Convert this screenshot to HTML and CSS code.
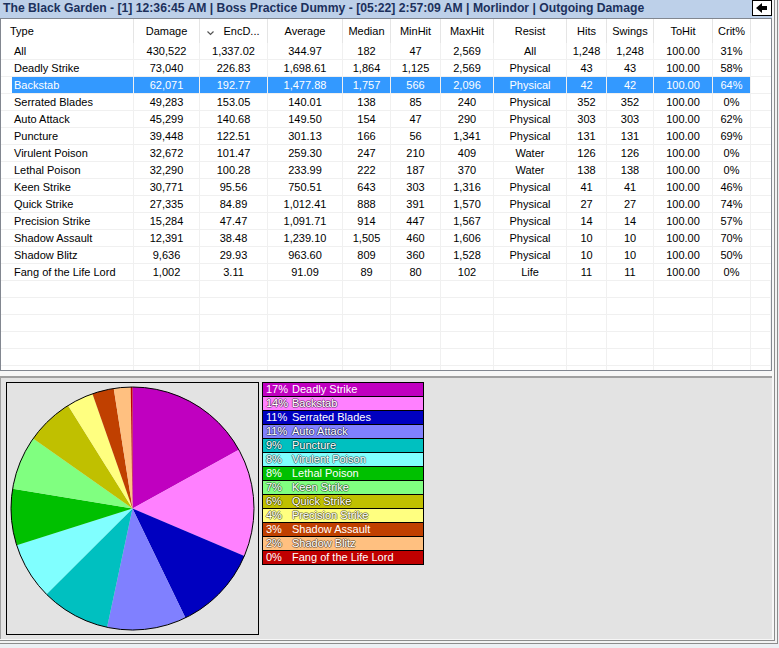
FILE: index.html
```html
<!DOCTYPE html>
<html>
<head>
<meta charset="utf-8">
<link rel="stylesheet" href="styles.css">
</head>
<body>
<div class="frame-outer">
<div class="frame-inner">
  <div class="titlebar">
    <span class="title">The Black Garden - [1] 12:36:45 AM | Boss Practice Dummy - [05:22] 2:57:09 AM | Morlindor | Outgoing Damage</span>
    <span class="backbtn"><svg width="18" height="14" viewBox="0 0 18 14"><path d="M3 7 L9 2 L9 5 L14 5 L14 9 L9 9 L9 12 Z" fill="#000"/></svg></span>
  </div>
  <div class="list">
    <table class="grid">
      <colgroup>
        <col class="w133"><col class="w66"><col class="w68"><col class="w75"><col class="w48"><col class="w50"><col class="w53"><col class="w73"><col class="w40"><col class="w47"><col class="w59"><col class="w38"><col>
      </colgroup>
      <thead>
        <tr><th class="c-type">Type</th><th>Damage</th><th><svg class="chev" width="7" height="5" viewBox="0 0 7 5"><path d="M0.5 0.5 L3.5 3.5 L6.5 0.5" fill="none" stroke="#555" stroke-width="1.2"/></svg><span class="enc">EncD...</span></th><th>Average</th><th>Median</th><th>MinHit</th><th>MaxHit</th><th>Resist</th><th>Hits</th><th>Swings</th><th>ToHit</th><th>Crit%</th><th class="c-fill"></th></tr>
      </thead>
      <tbody>
        <tr><td class="c-type">All</td><td>430,522</td><td>1,337.02</td><td>344.97</td><td>182</td><td>47</td><td>2,569</td><td>All</td><td>1,248</td><td>1,248</td><td>100.00</td><td>31%</td><td class="c-fill"></td></tr>
        <tr><td class="c-type">Deadly Strike</td><td>73,040</td><td>226.83</td><td>1,698.61</td><td>1,864</td><td>1,125</td><td>2,569</td><td>Physical</td><td>43</td><td>43</td><td>100.00</td><td>58%</td><td class="c-fill"></td></tr>
        <tr class="sel"><td class="c-type">Backstab</td><td>62,071</td><td>192.77</td><td>1,477.88</td><td>1,757</td><td>566</td><td>2,096</td><td>Physical</td><td>42</td><td>42</td><td>100.00</td><td>64%</td><td class="c-fill"></td></tr>
        <tr><td class="c-type">Serrated Blades</td><td>49,283</td><td>153.05</td><td>140.01</td><td>138</td><td>85</td><td>240</td><td>Physical</td><td>352</td><td>352</td><td>100.00</td><td>0%</td><td class="c-fill"></td></tr>
        <tr><td class="c-type">Auto Attack</td><td>45,299</td><td>140.68</td><td>149.50</td><td>154</td><td>47</td><td>290</td><td>Physical</td><td>303</td><td>303</td><td>100.00</td><td>62%</td><td class="c-fill"></td></tr>
        <tr><td class="c-type">Puncture</td><td>39,448</td><td>122.51</td><td>301.13</td><td>166</td><td>56</td><td>1,341</td><td>Physical</td><td>131</td><td>131</td><td>100.00</td><td>69%</td><td class="c-fill"></td></tr>
        <tr><td class="c-type">Virulent Poison</td><td>32,672</td><td>101.47</td><td>259.30</td><td>247</td><td>210</td><td>409</td><td>Water</td><td>126</td><td>126</td><td>100.00</td><td>0%</td><td class="c-fill"></td></tr>
        <tr><td class="c-type">Lethal Poison</td><td>32,290</td><td>100.28</td><td>233.99</td><td>222</td><td>187</td><td>370</td><td>Water</td><td>138</td><td>138</td><td>100.00</td><td>0%</td><td class="c-fill"></td></tr>
        <tr><td class="c-type">Keen Strike</td><td>30,771</td><td>95.56</td><td>750.51</td><td>643</td><td>303</td><td>1,316</td><td>Physical</td><td>41</td><td>41</td><td>100.00</td><td>46%</td><td class="c-fill"></td></tr>
        <tr><td class="c-type">Quick Strike</td><td>27,335</td><td>84.89</td><td>1,012.41</td><td>888</td><td>391</td><td>1,570</td><td>Physical</td><td>27</td><td>27</td><td>100.00</td><td>74%</td><td class="c-fill"></td></tr>
        <tr><td class="c-type">Precision Strike</td><td>15,284</td><td>47.47</td><td>1,091.71</td><td>914</td><td>447</td><td>1,567</td><td>Physical</td><td>14</td><td>14</td><td>100.00</td><td>57%</td><td class="c-fill"></td></tr>
        <tr><td class="c-type">Shadow Assault</td><td>12,391</td><td>38.48</td><td>1,239.10</td><td>1,505</td><td>460</td><td>1,606</td><td>Physical</td><td>10</td><td>10</td><td>100.00</td><td>70%</td><td class="c-fill"></td></tr>
        <tr><td class="c-type">Shadow Blitz</td><td>9,636</td><td>29.93</td><td>963.60</td><td>809</td><td>360</td><td>1,528</td><td>Physical</td><td>10</td><td>10</td><td>100.00</td><td>50%</td><td class="c-fill"></td></tr>
        <tr><td class="c-type">Fang of the Life Lord</td><td>1,002</td><td>3.11</td><td>91.09</td><td>89</td><td>80</td><td>102</td><td>Life</td><td>11</td><td>11</td><td>100.00</td><td>0%</td><td class="c-fill"></td></tr>
        <tr class="empty"><td></td><td></td><td></td><td></td><td></td><td></td><td></td><td></td><td></td><td></td><td></td><td></td><td></td></tr>
        <tr class="empty"><td></td><td></td><td></td><td></td><td></td><td></td><td></td><td></td><td></td><td></td><td></td><td></td><td></td></tr>
        <tr class="empty"><td></td><td></td><td></td><td></td><td></td><td></td><td></td><td></td><td></td><td></td><td></td><td></td><td></td></tr>
        <tr class="empty"><td></td><td></td><td></td><td></td><td></td><td></td><td></td><td></td><td></td><td></td><td></td><td></td><td></td></tr>
        <tr class="empty"><td></td><td></td><td></td><td></td><td></td><td></td><td></td><td></td><td></td><td></td><td></td><td></td><td></td></tr>
        <tr class="empty"><td></td><td></td><td></td><td></td><td></td><td></td><td></td><td></td><td></td><td></td><td></td><td></td><td></td></tr>
      </tbody>
    </table>
  </div>
  <div class="splitter"></div>
  <div class="lower">
    <div class="piebox">
      <svg width="251" height="251" viewBox="0 0 251 251">
        <path d="M125.5 125.5 L125.5 4 A121.5 121.5 0 0 1 231.85 66.74 Z" fill="#c000c0"/>
        <path d="M125.5 125.5 L231.85 66.74 A121.5 121.5 0 0 1 237.35 172.93 Z" fill="#ff80ff"/>
        <path d="M125.5 125.5 L237.35 172.93 A121.5 121.5 0 0 1 178.40 234.87 Z" fill="#0000c0"/>
        <path d="M125.5 125.5 L178.40 234.87 A121.5 121.5 0 0 1 100.09 244.31 Z" fill="#8080ff"/>
        <path d="M125.5 125.5 L100.09 244.31 A121.5 121.5 0 0 1 39.49 211.32 Z" fill="#00c0c0"/>
        <path d="M125.5 125.5 L39.49 211.32 A121.5 121.5 0 0 1 9.70 162.28 Z" fill="#80ffff"/>
        <path d="M125.5 125.5 L9.70 162.28 A121.5 121.5 0 0 1 5.63 105.70 Z" fill="#00c000"/>
        <path d="M125.5 125.5 L5.63 105.70 A121.5 121.5 0 0 1 26.11 55.61 Z" fill="#80ff80"/>
        <path d="M125.5 125.5 L26.11 55.61 A121.5 121.5 0 0 1 61.07 22.49 Z" fill="#c0c000"/>
        <path d="M125.5 125.5 L61.07 22.49 A121.5 121.5 0 0 1 85.44 10.79 Z" fill="#ffff80"/>
        <path d="M125.5 125.5 L85.44 10.79 A121.5 121.5 0 0 1 106.73 5.46 Z" fill="#c04000"/>
        <path d="M125.5 125.5 L106.73 5.46 A121.5 121.5 0 0 1 123.74 4.01 Z" fill="#ffc080"/>
        <path d="M125.5 125.5 L123.74 4.01 A121.5 121.5 0 0 1 125.5 4 Z" fill="#c00000"/>
        <circle cx="125.5" cy="125.5" r="121.5" fill="none" stroke="#000" stroke-width="1"/>
      </svg>
    </div>
    <div class="legend">
      <div class="lg-row c1"><span class="pct">17%</span><span>Deadly Strike</span></div>
      <div class="lg-row c2 lt"><span class="pct">14%</span><span>Backstab</span></div>
      <div class="lg-row c3"><span class="pct">11%</span><span>Serrated Blades</span></div>
      <div class="lg-row c4 lt"><span class="pct">11%</span><span>Auto Attack</span></div>
      <div class="lg-row c5 lt"><span class="pct">9%</span><span>Puncture</span></div>
      <div class="lg-row c6 lt"><span class="pct">8%</span><span>Virulent Poison</span></div>
      <div class="lg-row c7"><span class="pct">8%</span><span>Lethal Poison</span></div>
      <div class="lg-row c8 lt"><span class="pct">7%</span><span>Keen Strike</span></div>
      <div class="lg-row c9 lt"><span class="pct">6%</span><span>Quick Strike</span></div>
      <div class="lg-row c10 lt"><span class="pct">4%</span><span>Precision Strike</span></div>
      <div class="lg-row c11"><span class="pct">3%</span><span>Shadow Assault</span></div>
      <div class="lg-row c12 lt"><span class="pct">2%</span><span>Shadow Blitz</span></div>
      <div class="lg-row c13"><span class="pct">0%</span><span>Fang of the Life Lord</span></div>
    </div>
  </div>
</div>
</div>
</body>
</html>
```
FILE: styles.css
```css
* { box-sizing: border-box; }
html, body { margin: 0; padding: 0; }
body {
  width: 779px;
  height: 648px;
  overflow: hidden;
  background: #eceff3;
  font-family: "Liberation Sans", Arial, sans-serif;
  font-size: 11px;
  color: #000;
}
.frame-outer {
  width: 778px;
  height: 644px;
  border-right: 1px solid #8c8c8c;
  border-bottom: 1px solid #8c8c8c;
  padding: 0 2px 2px 0;
  background: #f2f2f2;
}
.frame-inner {
  width: 775px;
  height: 641px;
  border-right: 1px solid #8c8c8c;
  border-bottom: 1px solid #8c8c8c;
  padding: 0 2px 1px 0;
  display: flex;
  flex-direction: column;
  background: #f7f7f7;
}
.titlebar {
  height: 18px;
  flex: none;
  display: flex;
  background: #bdd0e9;
}
.title {
  flex: 1;
  padding-left: 3px;
  line-height: 17px;
  font-weight: bold;
  font-size: 12.2px;
  color: #1c305c;
  white-space: nowrap;
  overflow: hidden;
}
.backbtn {
  width: 20px;
  height: 16px;
  border: 1px solid #000;
  background: #fff;
  display: flex;
  align-items: center;
  justify-content: center;
}
.list {
  flex: none;
  height: 353px;
  border: 1px solid #828790;
  background: #fff;
  overflow: hidden;
}
.grid {
  width: 770px;
  table-layout: fixed;
  border-collapse: separate;
  border-spacing: 0;
}
.w133 { width: 133px; }
.w66 { width: 66px; }
.w68 { width: 68px; }
.w75 { width: 75px; }
.w48 { width: 48px; }
.w50 { width: 50px; }
.w53 { width: 53px; }
.w73 { width: 73px; }
.w40 { width: 40px; }
.w47 { width: 47px; }
.w59 { width: 59px; }
.w38 { width: 38px; }
.grid th, .grid td {
  padding: 0;
  text-align: center;
  white-space: nowrap;
  overflow: hidden;
  font-weight: normal;
}
.grid thead th {
  height: 24px;
  border-right: 1px solid #e5e5e5;
  color: #000;
}
.grid thead th.c-fill { border-right: none; }
.grid tbody td {
  height: 17px;
  border-right: 1px solid #f0f0f0;
  border-bottom: 1px solid #f0f0f0;
  line-height: 16px;
}
.grid tbody td.c-fill { border-right: none; }
.grid .c-type { text-align: left; padding-left: 13px; }
.grid th.c-type { padding-left: 9px; }
.chev { vertical-align: middle; margin-right: 9px; position: relative; top: 1px; }
.sel td { background: #3399ff; color: #fff; }
.sel td.c-type { background: linear-gradient(to right, #fff 11px, #3399ff 11px); }
.sel td.c-fill { background: none; }
.splitter { flex: none; height: 5px; }
.lower {
  flex: 1;
  display: flex;
  align-items: flex-start;
  background: #e3e3e3;
  border-top: 2px solid #a0a0a0;
  border-left: 1px solid #a0a0a0;
  padding: 4px 0 0 5px;
}
.piebox {
  width: 253px;
  height: 253px;
  border: 1px solid #000;
  flex: none;
}
.piebox svg { display: block; }
.legend {
  margin-left: 3px;
  width: 162px;
  flex: none;
}
.lg-row {
  height: 15px;
  border: 1px solid #000;
  margin-top: -1px;
  display: flex;
  align-items: center;
  padding-left: 3px;
  color: #fff;
  line-height: 13px;
  white-space: nowrap;
}
.lg-row:first-child { margin-top: 0; }
.lg-row.lt { text-shadow: 1px 0 rgba(0,0,0,0.42), -1px 0 rgba(0,0,0,0.42), 0 1px rgba(0,0,0,0.42), 0 -1px rgba(0,0,0,0.42); }
.pct { width: 26px; flex: none; }
.c1 { background: #c000c0; }
.c2 { background: #ff80ff; }
.c3 { background: #0000c0; }
.c4 { background: #8080ff; }
.c5 { background: #00c0c0; }
.c6 { background: #80ffff; }
.c7 { background: #00c000; }
.c8 { background: #80ff80; }
.c9 { background: #c0c000; }
.c10 { background: #ffff80; }
.c11 { background: #c04000; }
.c12 { background: #ffc080; }
.c13 { background: #c00000; }
```
